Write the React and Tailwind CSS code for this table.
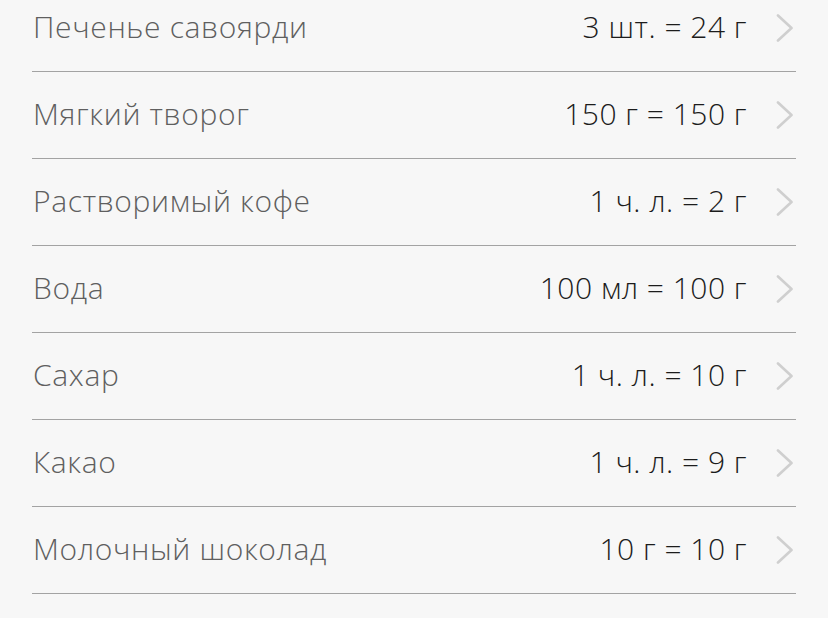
const items = [
  { name: 'Печенье савоярди', amount: '3 шт. = 24 г' },
  { name: 'Мягкий творог', amount: '150 г = 150 г' },
  { name: 'Растворимый кофе', amount: '1 ч. л. = 2 г' },
  { name: 'Вода', amount: '100 мл = 100 г' },
  { name: 'Сахар', amount: '1 ч. л. = 10 г' },
  { name: 'Какао', amount: '1 ч. л. = 9 г' },
  { name: 'Молочный шоколад', amount: '10 г = 10 г' },
];

function Chevron() {
  return (
    <svg width="18" height="28" viewBox="0 0 18 28" fill="none" className="shrink-0">
      <path d="M2 1.5 L15.5 14 L2 26.5" stroke="#cfcfcf" strokeWidth="2.6" strokeLinecap="round" strokeLinejoin="round" />
    </svg>
  );
}

export default function App() {
  return (
    <div className="h-[618px] overflow-hidden bg-[#f7f7f7] pl-[32px] pr-[32px] font-['Open_Sans',sans-serif] font-light">
      <ul className="-mt-[15px]">
        {items.map((item, i) => (
          <li key={i} className="h-[87px] flex items-center border-b border-[#a3a3a3]">
            <span className="flex-1 pl-[1px] pb-[3px] text-[30px] text-[#5f5f5f] tracking-[0.65px]">{item.name}</span>
            <span className="pb-[3px] text-[30px] text-[#1c1c1c] tracking-[0.5px]">{item.amount}</span>
            <span className="ml-[29px] mr-[2px]"><Chevron /></span>
          </li>
        ))}
      </ul>
    </div>
  );
}
